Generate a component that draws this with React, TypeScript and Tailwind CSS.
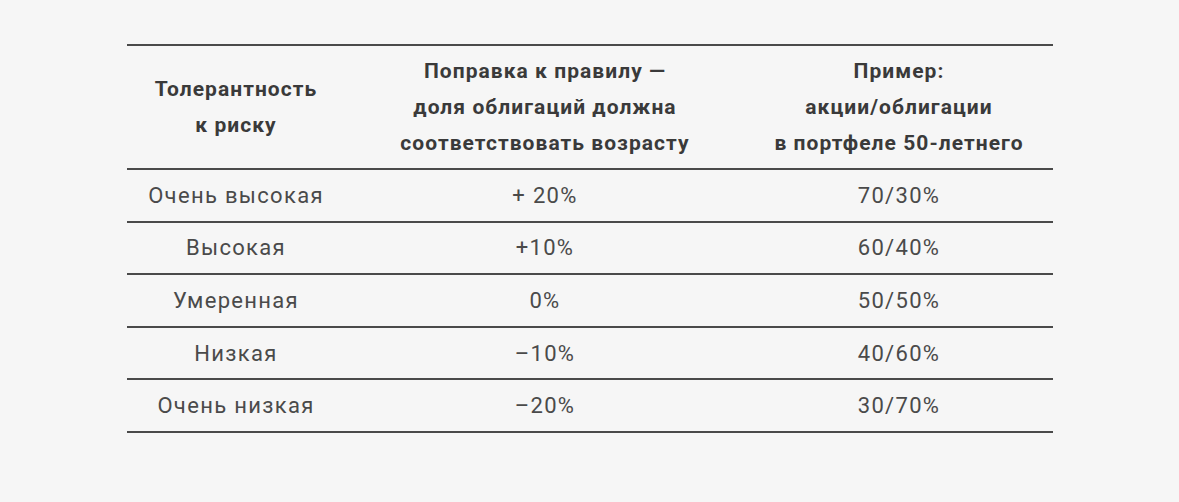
const rows = [
  ['Очень высокая', '+ 20%', '70/30%'],
  ['Высокая', '+10%', '60/40%'],
  ['Умеренная', '0%', '50/50%'],
  ['Низкая', '–10%', '40/60%'],
  ['Очень низкая', '–20%', '30/70%'],
];

export default function App() {
  return (
    <div className="w-[1179px] h-[502px] bg-[#f6f6f6] pt-[44px] pl-[127px] font-['Roboto',sans-serif]">
      <div className="w-[926px] border-t-2 border-[#4a4a4a]">
        <div className="grid grid-cols-[218px_400px_308px] h-[124px] items-center border-b-2 border-[#4a4a4a] text-[21px] font-bold tracking-[0.05em] leading-[36px] text-[#3a3a3a] text-center">
          <div>
            Толерантность
            <br />к риску
          </div>
          <div>
            Поправка к правилу —
            <br />
            доля облигаций должна
            <br />
            соответствовать возрасту
          </div>
          <div>
            Пример:
            <br />
            акции/облигации
            <br />в портфеле 50-летнего
          </div>
        </div>
        {rows.map((r) => (
          <div
            key={r[0]}
            className="grid grid-cols-[218px_400px_308px] h-[52.6px] items-center border-b-2 border-[#4a4a4a] text-[22px] tracking-[0.06em] text-[#4a4a4a] text-center"
          >
            <div>{r[0]}</div>
            <div>{r[1]}</div>
            <div>{r[2]}</div>
          </div>
        ))}
      </div>
    </div>
  );
}
